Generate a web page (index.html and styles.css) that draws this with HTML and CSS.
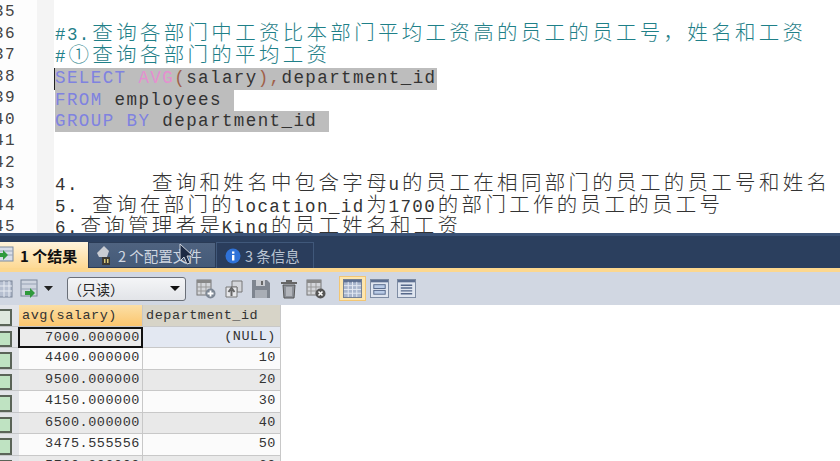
FILE: index.html
```html
<!DOCTYPE html>
<html lang="zh">
<head>
<meta charset="utf-8">
<title>SQL</title>
<link rel="stylesheet" href="styles.css">
</head>
<body>
<section class="editor">
  <div class="gutter">
    <div>35</div><div>36</div><div>37</div><div>38</div><div>39</div><div>40</div><div>41</div><div>42</div><div>43</div><div>44</div><div>45</div>
  </div>
  <div class="code">
    <div class="line"></div>
    <div class="line cm">#3.<i>查询各部门中工资比本部门平均工资高的员工的员工号，姓名和工资</i></div>
    <div class="line cm">#<i>①查询各部门的平均工资</i></div>
    <div class="line caret"><span class="sel"><b>SELECT</b> <em>AVG</em><u>(</u>salary<u>)</u><u>,</u>department_id</span></div>
    <div class="line"><span class="sel"><b>FROM</b> employees </span></div>
    <div class="line"><span class="sel"><b>GROUP BY</b> department_id </span></div>
    <div class="line"></div>
    <div class="line"></div>
    <div class="line">4.      <i>查询和姓名中包含字母</i>u<i>的员工在相同部门的员工的员工号和姓名</i></div>
    <div class="line">5. <i>查询在部门的</i>location_id<i>为</i>1700<i>的部门工作的员工的员工号</i></div>
    <div class="line">6.<i>查询管理者是</i>King<i>的员工姓名和工资</i></div>
  </div>
</section>
<section class="results">
  <div class="tabs">
    <div class="tab active">
      <svg class="ti" width="18" height="20" viewBox="0 0 18 20"><rect x="1" y="2" width="14" height="14" fill="#d8dee8" stroke="#7d8ba0"/><path d="M1 6h14M1 10h14" stroke="#9aa6b8"/><path d="M-1 8h6V5l5 5-5 5v-3h-6z" fill="#2f9a3c"/></svg>
      <span><strong>1 个结果</strong></span>
    </div>
    <div class="tab t2">
      <svg class="ti" width="18" height="22" viewBox="0 0 18 22"><path d="M1 9l7-7 5 5-2 6H3z" fill="#c9ccd2"/><rect x="6" y="13" width="8" height="8" fill="#3c3a34"/><rect x="8" y="15" width="1.5" height="4" fill="#d8c878"/><rect x="11" y="15" width="1.5" height="4" fill="#d8c878"/></svg>
      <span>2 个配置文件</span>
    </div>
    <div class="tab t3">
      <svg class="ti" width="16" height="16" viewBox="0 0 16 16"><circle cx="8" cy="8" r="7.5" fill="#2f72d8"/><rect x="7" y="7" width="2.4" height="5.5" fill="#fff"/><rect x="7" y="3.5" width="2.4" height="2.2" fill="#fff"/></svg>
      <span>3 条信息</span>
    </div>
  </div>
  <div class="toolbar">
    <svg class="first" width="13" height="18" viewBox="0 0 13 18"><rect x="-6" y="1" width="18" height="16" fill="#b6bfd0" stroke="#7a8598"/><path d="M0 6h12M0 11h12M4 1v16M9 1v16" stroke="#e8ecf2"/></svg>
    <svg class="second" width="20" height="20" viewBox="0 0 20 20"><rect x="1" y="1" width="16" height="16" fill="#cfd5e0" stroke="#7a8598"/><path d="M1 5h16M1 10h16" stroke="#97a2b5"/><path d="M5 12h5V9l5 5-5 5v-3H5z" fill="#2f9a3c"/></svg>
    <svg class="drop" width="9" height="5" viewBox="0 0 9 5"><path d="M0 0h9L4.500 5z" fill="#222"/></svg>
    <div class="select"><span>（只读）</span><svg width="10" height="5" viewBox="0 0 10 5"><path d="M0 0h10L5 5z" fill="#111"/></svg></div>
    <div class="tools">
      <svg width="20" height="20" viewBox="0 0 20 20"><rect x="1" y="1" width="14" height="15" fill="#d4d6da" stroke="#777"/><rect x="1" y="1" width="14" height="3" fill="#888"/><path d="M1 8h14M1 12h14M5 4v12M10 4v12" stroke="#999"/><circle cx="14.500" cy="14.500" r="5" fill="#7d8794"/><path d="M11.500 14.500h6M14.500 11.500v6" stroke="#fff" stroke-width="1.8"/></svg>
      <svg width="20" height="20" viewBox="0 0 20 20"><path d="M8 2h10v11h-5V8H8z" fill="#d4d6da" stroke="#777"/><path d="M2 8h11v10H2z" fill="#e6e7ea" stroke="#777"/><path d="M7.500 17v-6M4.500 13l3-4 3 4" fill="none" stroke="#666" stroke-width="2"/></svg>
      <svg width="20" height="20" viewBox="0 0 20 20"><path d="M1 1h15l3 3v15H1z" fill="#7e858f"/><rect x="5" y="1" width="9" height="6" fill="#c9ccd1"/><rect x="10" y="2" width="2" height="4" fill="#666"/><rect x="4" y="11" width="12" height="8" fill="#a9aeb6"/></svg>
      <svg width="20" height="20" viewBox="0 0 20 20"><rect x="2" y="3" width="16" height="2" fill="#666"/><rect x="7" y="1" width="6" height="2" fill="#666"/><path d="M4 6h12l-1 13H5z" fill="#8c9097" stroke="#555"/><path d="M8 8v9M10 8v9M12 8v9" stroke="#d8dadf"/></svg>
      <svg width="20" height="20" viewBox="0 0 20 20"><rect x="1" y="1" width="14" height="15" fill="#d4d6da" stroke="#777"/><rect x="1" y="1" width="14" height="3" fill="#888"/><path d="M1 8h14M1 12h14M5 4v12M10 4v12" stroke="#999"/><circle cx="14.500" cy="14.500" r="5" fill="#555"/><path d="M12.500 12.500l4 4M16.500 12.500l-4 4" stroke="#fff" stroke-width="1.6"/></svg>
    </div>
    <div class="views">
      <div class="view on"><svg viewBox="0 0 20 20"><rect x=".5" y=".5" width="19" height="19" fill="#a9b6cd" stroke="#6f7c94"/><rect x="1" y="1" width="18" height="2.500" fill="#5d6f90"/><path d="M1 7h18M1 11h18M1 15h18M5.500 3v16M10 3v16M14.500 3v16" stroke="#e4e9f2"/></svg></div>
      <div class="view"><svg viewBox="0 0 20 20"><rect x=".5" y=".5" width="19" height="19" fill="#dfe5ef" stroke="#7a88a0"/><rect x="1" y="1" width="18" height="2.500" fill="#5d6f90"/><rect x="4" y="6" width="12" height="4" fill="#b9cbe6" stroke="#56688a"/><rect x="4" y="12" width="12" height="4" fill="#b9cbe6" stroke="#56688a"/></svg></div>
      <div class="view"><svg viewBox="0 0 20 20"><rect x=".5" y=".5" width="19" height="19" fill="#dfe5ef" stroke="#7a88a0"/><rect x="1" y="1" width="18" height="2.500" fill="#5d6f90"/><path d="M4 6.500h12M4 9.500h12M4 12.500h12M4 15.500h12" stroke="#56688a" stroke-width="1.500"/></svg></div>
    </div>
  </div>
  <div class="grid">
    <div class="row head"><div class="mark"></div><div class="c1 h1">avg(salary)</div><div class="c2 h2">department_id</div></div>
    <div class="row odd first-row"><div class="mark"></div><div class="c1 selected">7000.000000</div><div class="c2 nul">(NULL)</div></div>
    <div class="row"><div class="mark"></div><div class="c1">4400.000000</div><div class="c2">10</div></div>
    <div class="row odd"><div class="mark"></div><div class="c1">9500.000000</div><div class="c2">20</div></div>
    <div class="row"><div class="mark"></div><div class="c1">4150.000000</div><div class="c2">30</div></div>
    <div class="row odd"><div class="mark"></div><div class="c1">6500.000000</div><div class="c2">40</div></div>
    <div class="row"><div class="mark"></div><div class="c1">3475.555556</div><div class="c2">50</div></div>
    <div class="row odd"><div class="mark"></div><div class="c1">5760.000000</div><div class="c2">60</div></div>
  </div>
</section>
<svg class="cursor" width="16" height="24" viewBox="0 0 16 24"><path d="M1 1v17l4-4 3 7 3-1-3-7h6z" fill="#1c2a44" stroke="#cdd3dc" stroke-width="1"/></svg>
</body>
</html>
```
FILE: styles.css
```css
* { box-sizing: border-box; }
html, body { margin: 0; height: 100%; overflow: hidden; }
body {
  width: 840px;
  height: 461px;
  background: #fff;
  display: flex;
  flex-direction: column;
  font-family: "Liberation Mono", "Noto Sans CJK SC", monospace;
  color: #2b2b2b;
}
.editor {
  height: 233px;
  display: flex;
  overflow: hidden;
  flex: none;
}
.gutter {
  width: 63px;
  margin-left: -9px;
  flex: none;
  padding: 2px 0 0 3px;
  background: linear-gradient(90deg, #fdfdfd 0 46px, #f4f4f4 46px);
  color: #444;
  font-size: 16px;
  letter-spacing: 1.5px;
}
.gutter div { height: 21.5px; line-height: 21.5px; }
.code { flex: 1; padding: 4px 0 0 1px; min-width: 0; }
.line {
  height: 21.4px;
  line-height: 21.4px;
  font-size: 17.5px;
  letter-spacing: 1.42px;
  white-space: pre;
  color: #333;
}
.line i {
  font-style: normal;
  font-family: "Noto Sans CJK SC", sans-serif;
  font-size: 20.5px;
  letter-spacing: 3.3px;
  line-height: 0;
  font-weight: 300;
  margin-left: 1.6px;
  margin-right: -1.6px;
}
.cm { color: #1f8088; }
.sel { background: #bdbdbd; display: inline-block; height: 21.4px; }
.sel b { font-weight: 400; color: #7f82e0; }
.sel em { font-style: normal; color: #e58fd0; }
.sel u { text-decoration: none; color: #a0604a; }
.caret { box-shadow: -1px 0 0 #222; }
.results { flex: 1; display: flex; flex-direction: column; min-height: 0; }
.tabs {
  height: 39px;
  flex: none;
  padding-top: 9px;
  display: flex;
  background: linear-gradient(#3a5276 0 3px, #2b3f5e 3px);
  border-bottom: 4px solid #fcd78e;
  font-family: "Noto Sans CJK SC", sans-serif;
  font-size: 14.5px;
}
.tab { display: flex; align-items: center; height: 26px; gap: 4px; }
.tab.active {
  width: 92px;
  margin-left: -4px;
  padding-left: 2px;
  background: linear-gradient(#fff4dc, #fdd994);
  color: #111;
  font-size: 15px;
  gap: 4px;
}
.tab strong { font-weight: 700; }
.t2 {
  width: 128px;
  padding-left: 7px;
  background: linear-gradient(#4f6380, #445a78);
  color: #cfd6e0;
  border: 1px solid #2a3b56;
}
.t3 {
  width: 98px;
  padding-left: 8px;
  background: #2a3d5c;
  color: #b9c3d2;
  border: 1px solid #40587a;
  border-bottom: 0;
}
.toolbar {
  height: 33px;
  flex: none;
  display: flex;
  align-items: center;
  background: #d1d7e2;
}
.first { flex: none; margin-right: 7px; }
.second { flex: none; }
.drop { margin-left: 4px; flex: none; }
.select {
  width: 119px;
  height: 24px;
  margin: 0 10px 0 14px;
  flex: none;
  display: flex;
  align-items: center;
  justify-content: space-between;
  padding: 0 5px 0 0;
  border: 1px solid #6a6f78;
  border-radius: 3px;
  background: linear-gradient(#f4f5f7, #e2e4e8);
  font-family: "Noto Sans CJK SC", sans-serif;
  font-size: 14px;
  color: #222;
}
.tools { display: flex; gap: 7.5px; flex: none; }
.views { display: flex; align-items: center; margin-left: 13px; }
.view { width: 27px; padding: 2px 3px; border: 1px solid transparent; }
.view svg { display: block; width: 19px; height: 19px; }
.view.on { background: #fde6ae; border-color: #f3c673; }
.grid {
  flex: 1;
  background: #fff;
  font-size: 13.5px;
  letter-spacing: 0.53px;
  overflow: hidden;
}
.row { display: flex; height: 21.5px; line-height: 20px; color: #333; }
.mark {
  width: 19px;
  flex: none;
  background: #e2e4e8;
  border-bottom: 1px solid #c4c6c8;
  padding: 4px 7px 4px 0;
}
.mark::after {
  content: "";
  display: block;
  height: 100%;
  background: #bfe3c2;
  border: 2px solid #5a6458;
  border-left: 0;
}
.c1, .c2 {
  flex: none;
  text-align: right;
  padding-right: 3px;
  border-right: 1px solid #c8c8c8;
  border-bottom: 1px solid #c8c8c8;
  background: #fbfbfb;
}
.c1 { width: 124px; padding-right: 2px; }
.c2 { width: 138px; padding-right: 4px; }
.row.odd .c1, .row.odd .c2 { background: #e9e9e9; }
.row.first-row .c2 { background: #e3e8f2; }
.row.first-row .selected { background: #ebebeb; border: 2px solid #111; line-height: 17px; padding-right: 1px; margin-left: -1px; width: 125px; }
.head { line-height: 22px; }
.head .mark::after { background: #dfe8df; }
.head .c1, .head .c2 { text-align: left; padding-left: 3px; }
.head .c1 { background: linear-gradient(#fbdfa6, #fcc66e); }
.head .c2 { background: #d7d4c8; }
.cursor { position: absolute; left: 179px; top: 243px; }
```
